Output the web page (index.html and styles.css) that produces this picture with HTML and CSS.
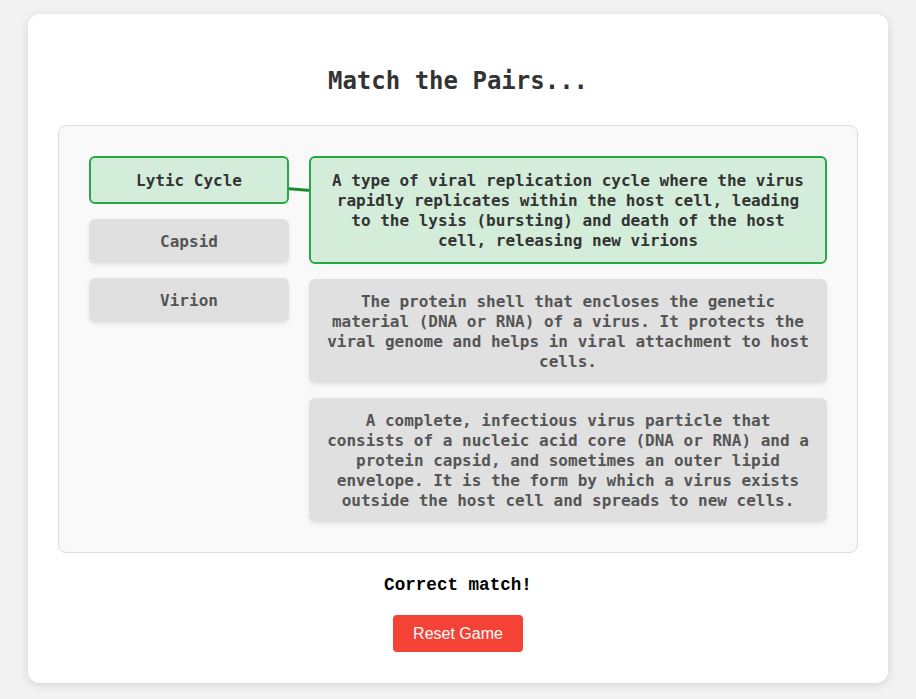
FILE: index.html
```html
<!DOCTYPE html>
<html>
<head>
<meta charset="utf-8">
<link rel="stylesheet" href="styles.css">
</head>
<body>
<div class="card">
  <h1 class="title">Match the Pairs...</h1>
  <div class="game">
    <svg class="lines" width="800" height="428" viewBox="0 0 800 428">
      <line x1="131" y1="55" x2="510" y2="85" stroke="#1e8a2e" stroke-width="3"/>
    </svg>
    <div class="col col-left">
      <div class="item matched">Lytic Cycle</div>
      <div class="item">Capsid</div>
      <div class="item">Virion</div>
    </div>
    <div class="col col-right">
      <div class="item matched">A type of viral replication cycle where the virus rapidly replicates within the host cell, leading to the lysis (bursting) and death of the host cell, releasing new virions</div>
      <div class="item">The protein shell that encloses the genetic material (DNA or RNA) of a virus. It protects the viral genome and helps in viral attachment to host cells.</div>
      <div class="item">A complete, infectious virus particle that consists of a nucleic acid core (DNA or RNA) and a protein capsid, and sometimes an outer lipid envelope. It is the form by which a virus exists outside the host cell and spreads to new cells.</div>
    </div>
  </div>
  <div class="feedback">Correct match!</div>
  <button class="reset">Reset Game</button>
</div>
</body>
</html>
```

FILE: styles.css
```css
html, body {
  margin: 0;
  padding: 0;
}
body {
  background: #f2f2f2;
  font-family: "DejaVu Sans Mono", "Liberation Mono", monospace;
  padding: 14px 28px 16px 28px;
}
.card {
  background: #ffffff;
  border-radius: 12px;
  box-shadow: 0 2px 10px rgba(0, 0, 0, 0.12);
  padding: 30px 30px 31px 30px;
  display: flex;
  flex-direction: column;
  align-items: center;
}
.title {
  font-size: 24px;
  line-height: 28px;
  font-weight: bold;
  color: #333333;
  margin: 23px 0 30px 0;
}
.game {
  position: relative;
  align-self: stretch;
  background: #f9f9f9;
  border: 1px solid #dddddd;
  border-radius: 8px;
  padding: 30px;
  display: flex;
  gap: 20px;
  align-items: flex-start;
}
.lines {
  position: absolute;
  left: 0;
  top: 0;
  pointer-events: none;
  z-index: 0;
}
.col {
  display: flex;
  flex-direction: column;
  gap: 15px;
  position: relative;
  z-index: 1;
}
.col-left {
  width: 200px;
  flex: none;
}
.col-right {
  flex: 1;
}
.item {
  background: #e0e0e0;
  border-radius: 6px;
  padding: 13px 16px 11px 16px;
  font-size: 16px;
  line-height: 20px;
  font-weight: bold;
  color: #555555;
  text-align: center;
  box-shadow: 0 2px 4px rgba(0, 0, 0, 0.08);
}
.item.matched {
  background: #d4edda;
  border: 2px solid #28a745;
  color: #333333;
  box-shadow: none;
  padding: 13px 14px 11px 14px;
}
.feedback {
  margin-top: 21px;
  font-family: "Liberation Mono", monospace;
  font-size: 17.6px;
  line-height: 22px;
  font-weight: bold;
  color: #000000;
}
.reset {
  margin-top: 19px;
  background: #f44336;
  color: #ffffff;
  border: none;
  border-radius: 4px;
  font-family: "Liberation Sans", Arial, sans-serif;
  font-size: 16px;
  padding: 0 20px;
  height: 37px;
  white-space: nowrap;
}
```
